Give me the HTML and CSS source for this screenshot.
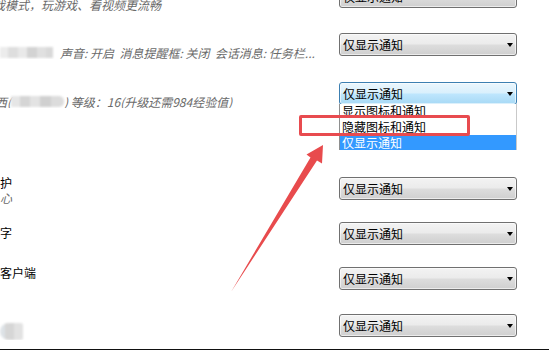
FILE: index.html
```html
<!DOCTYPE html>
<html lang="zh-CN">
<head>
<meta charset="utf-8">
<title>通知设置</title>
<link rel="stylesheet" href="styles.css">
</head>
<body>
<div class="screen">
  <div class="rows">
    <div class="row row-1">
      <div class="info">
        <div class="title"></div>
        <div class="desc shift-game">游戏模式，玩游戏、看视频更流畅</div>
      </div>
      <div class="combo"><span class="combo-text">仅显示通知</span><i class="caret"></i></div>
    </div>

    <div class="row row-2">
      <div class="info">
        <div class="title"></div>
        <div class="desc"><span class="mosaic mosaic-a"></span><span class="gap"></span>声音: 开启&nbsp; 消息提醒框: 关闭&nbsp; 会话消息: 任务栏...</div>
      </div>
      <div class="combo"><span class="combo-text">仅显示通知</span><i class="caret"></i></div>
    </div>

    <div class="row row-3">
      <div class="info">
        <div class="title"></div>
        <div class="desc"><span class="shift-name">西(</span><span class="mosaic mosaic-b"></span>) 等级：16(升级还需984经验值)</div>
      </div>
      <div class="combo-wrap">
        <div class="combo combo-focus"><span class="combo-text">仅显示通知</span><i class="caret"></i></div>
        <ul class="popup">
          <li class="opt opt-first">显示图标和通知</li>
          <li class="opt">隐藏图标和通知</li>
          <li class="opt opt-selected">仅显示通知</li>
        </ul>
      </div>
    </div>

    <div class="row row-4">
      <div class="info info-up">
        <div class="title">护</div>
        <div class="desc desc-gap">心</div>
      </div>
      <div class="combo"><span class="combo-text">仅显示通知</span><i class="caret"></i></div>
    </div>

    <div class="row row-5">
      <div class="info info-mid">
        <div class="title">字</div>
      </div>
      <div class="combo"><span class="combo-text">仅显示通知</span><i class="caret"></i></div>
    </div>

    <div class="row row-6">
      <div class="info info-up2">
        <div class="title">客户端</div>
      </div>
      <div class="combo"><span class="combo-text">仅显示通知</span><i class="caret"></i></div>
    </div>

    <div class="row row-7">
      <div class="info info-blob">
        <span class="blob"></span>
      </div>
      <div class="combo"><span class="combo-text">仅显示通知</span><i class="caret"></i></div>
    </div>
  </div>
  <div class="bottom-rule"></div>

  <div class="mark-box"></div>
  <svg class="mark-arrow" width="549" height="353" viewBox="0 0 549 353" aria-hidden="true">
    <polygon points="231,292 310.5,157.5 306.5,154.5 323,145 322,163.5 317,160.5" fill="#e84b4d"/>
  </svg>
</div>
</body>
</html>
```

FILE: styles.css
```css
* { box-sizing: border-box; }

html, body {
  margin: 0;
  padding: 0;
  background: #ffffff;
}

body {
  font-family: "Noto Sans CJK SC", "Noto Sans", sans-serif;
  font-size: 12px;
  color: #000;
}

.screen {
  position: relative;
  width: 549px;
  height: 353px;
  overflow: hidden;
  background: #fff;
}

.rows {
  display: flex;
  flex-direction: column;
  margin-top: -15px;
}

.row {
  display: flex;
  align-items: flex-start;
  flex: none;
}

.row-1 { height: 48px; }
.row-2 { height: 49px; }
.row-3 { height: 95px; }
.row-4 { height: 45px; }
.row-5 { height: 45px; }
.row-6 { height: 47px; }
.row-7 { height: 35px; }

.info {
  width: 339px;
  flex: none;
  overflow: hidden;
  white-space: nowrap;
}

.title {
  height: 13px;
  line-height: 13px;
  color: #000;
}

.desc {
  height: 13px;
  line-height: 13px;
  color: #6a6a6a;
  font-style: italic;
  display: flex;
  align-items: center;
}

.desc-gap { margin-top: 2px; }

.shift-game { margin-left: -19px; }
.shift-name { margin-left: -5px; }

.info-up { margin-top: -1px; }
.info-mid { padding-top: 4px; }
.info-up2 { margin-top: -1px; }
.info-blob { padding-top: 9px; }

.mosaic {
  display: inline-block;
  height: 11px;
  flex: none;
  filter: blur(0.8px);
}

.mosaic-a {
  width: 53px;
  background: linear-gradient(90deg,
    #ececec 0 8px, #dedede 8px 18px, #e9e9e9 18px 27px,
    #d3d3d3 27px 37px, #e0e0e0 37px 46px, #d9d9d9 46px 53px);
}

.mosaic-b {
  width: 53px;
  border-radius: 0 5px 5px 0;
  background: linear-gradient(90deg,
    #e6e6e6 0 9px, #d5d5d5 9px 19px, #e3e3e3 19px 29px,
    #d0d0d0 29px 40px, #dcdcdc 40px 53px);
}

.gap {
  display: inline-block;
  width: 7px;
}

.blob {
  display: block;
  width: 23px;
  height: 17px;
  border-radius: 9px 2px 2px 9px;
  background: linear-gradient(90deg, #dde2e6 0 5px, #d6d6d6 5px 14px, #e2e2e2 14px 23px);
  filter: blur(1px);
}

.combo-wrap {
  position: relative;
  flex: none;
  width: 178px;
}

.combo {
  flex: none;
  width: 178px;
  height: 23px;
  border: 1px solid #707070;
  border-radius: 3px;
  padding: 0 3px 0 3px;
  display: flex;
  align-items: center;
  justify-content: space-between;
  background: linear-gradient(#f3f3f3 0%, #ebebeb 48%, #dddddd 52%, #cfcfcf 100%);
  box-shadow: inset 0 0 0 1px rgba(255, 255, 255, 0.6);
}

.combo-focus {
  border-color: #3c7fb1;
  background: linear-gradient(#eaf6fd 0%, #d9f0fc 48%, #bee6fd 52%, #a7d9f5 100%);
}

.combo-text {
  line-height: 13px;
  color: #000;
}

.caret {
  width: 0;
  height: 0;
  border-left: 3.5px solid transparent;
  border-right: 3.5px solid transparent;
  border-top: 4px solid #000;
  margin-right: 0;
}

.popup {
  position: absolute;
  left: 0;
  top: 22px;
  width: 178px;
  height: 46px;
  margin: 0;
  padding: 0;
  list-style: none;
  background: #fff;
  border-left: 1px solid #8e8f8f;
  border-right: 1px solid #c9c9c9;
  overflow: hidden;
}

.opt {
  height: 16px;
  line-height: 16px;
  padding-left: 2px;
  color: #000;
}

.opt-first { margin-top: -1px; }

.opt-selected {
  background: #3399ff;
  color: #fff;
}

.bottom-rule {
  height: 1px;
  background: #111;
}

.mark-box {
  position: absolute;
  left: 299px;
  top: 115px;
  width: 171px;
  height: 21px;
  border: 3px solid #e84b4f;
  border-radius: 2px;
}

.mark-arrow {
  position: absolute;
  left: 0;
  top: 0;
}
```
